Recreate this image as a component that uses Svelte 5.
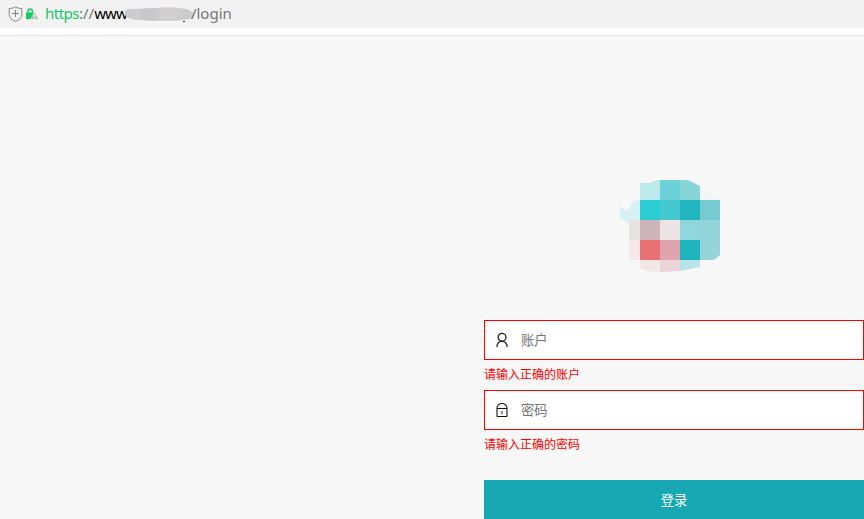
<script>
  let account = $state('');
  let password = $state('');

  // Logo tiles: x, y, width, height, colour
  const tiles = [
    [20, 0, 20, 20, '#bce9e9'], [40, 0, 20, 20, '#6bd1d8'], [60, 0, 20, 20, '#87d5d9'], [80, 0, 20, 20, '#f2f5f5'],
    [0, 0, 20, 50, '#d6f1f3'], [20, 20, 20, 20, '#2bcdd3'], [40, 20, 20, 20, '#43c8cf'], [60, 20, 20, 20, '#21b5c0'], [80, 20, 20, 20, '#75cbd1'],
    [9, 40, 11, 20, '#e9e2e3'], [20, 40, 20, 20, '#ccb4b8'], [40, 40, 20, 20, '#ece3e5'], [60, 40, 20, 20, '#90d6dc'], [80, 40, 20, 20, '#93d4da'],
    [0, 60, 20, 20, '#f5eaea'], [20, 60, 20, 20, '#e87176'], [40, 60, 20, 20, '#dea3ab'], [60, 60, 20, 20, '#1eb5bf'], [80, 60, 20, 20, '#95d3da'],
    [20, 80, 20, 20, '#f4e6e7'], [40, 80, 20, 20, '#ebd3d7'], [60, 80, 20, 20, '#b8e4e7']
  ];
</script>

<div class="window">
  <header class="address">
    <svg class="shield" width="15" height="16" viewBox="0 0 15 16" fill="none" stroke="#858585">
      <path d="M7.5 .7 C5.5 2 3.5 2.5 1.2 2.5 V8 C1.2 12 4 14.2 7.5 15.3 C11 14.2 13.8 12 13.8 8 V2.5 C11.5 2.5 9.5 2 7.5 .7Z" />
      <path d="M4 7.5h7M7.5 4v7" />
    </svg>
    <svg class="secure" width="13" height="12" viewBox="0 0 13 12">
      <path d="M2 5V3.2a2.2 2.2 0 0 1 4.4 0V5" fill="none" stroke="#12cc60" stroke-width="1.4" />
      <path d="M0 4.5h8v6.5H0z" fill="#12cc60" />
      <path d="M8.5 3.7 12.7 11.5H4.7z" fill="#b8b8b8" stroke="#f2f2f2" stroke-width=".5" />
      <path d="M8.7 6.3v2.6M8.7 9.7v1" stroke="#fff" />
    </svg>
    <div class="url"><span class="scheme">https</span><span>://</span><span class="host">www</span><svg class="mask" width="71" height="24" viewBox="0 0 71 24">
        <path d="M7 16 L66 15 Q62 23 42 23 Q20 24 7 16Z" fill="#f5f5f5" />
        <path d="M0 9 Q2 6 8 7 L30 6 Q50 5 62 7 Q72 11 68 16 Q58 19 47 19 Q30 19 16 18 Q3 18 0 13Z" fill="#cdcbcd" />
        <path d="M16 7 30 6v13l-14-1z" fill="#c8c8ca" />
        <path d="M35 6Q43 5 53 6l-2 13H35z" fill="#d1cecf" />
        <path d="M58 19.5h2" stroke="#333" />
      </svg><span class="path">/login</span></div>
  </header>

  <main>
    <form novalidate onsubmit={(event) => event.preventDefault()}>
      <svg class="logo" width="100" height="92" viewBox="0 0 100 92" shape-rendering="crispEdges">
        <defs>
          <clipPath id="logo-edge">
            <path d="M0 26 7 31 14 21 20 20V3H30L36 0H68L80 6 100 20V75L94 80H80V87L60 91 40 92 26 91 20 88V80H9V43L0 38Z" />
          </clipPath>
        </defs>
        <g clip-path="url(#logo-edge)">
          {#each tiles as [x, y, w, h, color]}
            <rect {x} {y} width={w} height={h} fill={color} />
          {/each}
        </g>
      </svg>

      <label class="field">
        <svg width="14" height="16" viewBox="0 0 14 16" fill="none" stroke="#222" stroke-width="1.3">
          <circle cx="7" cy="5.2" r="3.9" />
          <path d="M1.9 15C2.1 11.4 4 9.3 7 9.3s4.9 2.1 5.1 5.7" />
        </svg>
        <input type="text" placeholder="账户" bind:value={account} />
      </label>
      <p class="error">请输入正确的账户</p>

      <label class="field">
        <svg width="14" height="16" viewBox="0 0 14 16" fill="none" stroke="#111" stroke-width="1.1">
          <path d="M2 6.5V6a5 4.5 0 0 1 10 0v.5" />
          <rect x="2" y="6.5" width="10" height="8" rx=".5" />
          <path d="M7 9v3.2" stroke="#2b4f66" stroke-width="1.2" />
        </svg>
        <input type="password" placeholder="密码" bind:value={password} />
      </label>
      <p class="error">请输入正确的密码</p>

      <button type="submit">登录</button>
    </form>
  </main>
</div>

<style>
  .window {
    height: 519px;
    display: flex;
    flex-direction: column;
    overflow: hidden;
    background: #fff;
    font-family: "Noto Sans CJK SC", sans-serif;
  }
  .address {
    height: 28px;
    display: flex;
    align-items: center;
    padding-left: 8px;
    box-sizing: border-box;
    background: #f2f2f2;
    border-bottom-left-radius: 3px;
  }
  .secure { margin-left: 3px; }
  .url {
    display: flex;
    align-items: center;
    height: 28px;
    margin-left: 6px;
    font: 15px/26px "Noto Sans", sans-serif;
    color: #777;
  }
  .url span { padding-bottom: 2px; }
  .scheme { color: #12c866; letter-spacing: -0.5px; }
  .host { color: #000; letter-spacing: -0.9px; }
  .mask { margin: 0 -5px 0 -2px; }
  main {
    flex: 1;
    margin-top: 7px;
    border-top: 1px solid #e5e5e5;
    background: #f7f7f7;
    display: flex;
    justify-content: flex-end;
  }
  form {
    width: 380px;
    padding-top: 144px;
    display: flex;
    flex-direction: column;
  }
  .logo { margin: 0 0 48px 136px; }
  .field {
    height: 40px;
    box-sizing: border-box;
    border: 1px solid #f00;
    background: #fff;
    display: flex;
    align-items: center;
    padding-left: 10px;
  }
  input {
    flex: 1;
    min-width: 0;
    margin-left: 12px;
    padding: 0;
    border: 0;
    outline: 0;
    background: transparent;
    font: 13.3333px/20px "Noto Sans CJK SC", sans-serif;
  }
  input::placeholder { color: #757575; }
  .error {
    height: 30px;
    margin: 0;
    color: #f00;
    font-size: 12px;
    line-height: 28px;
  }
  .error + button { margin-top: 20px; }
  button {
    height: 39px;
    padding: 0;
    border: 0;
    background: #17a8b4;
    color: #fff;
    font: 13.3333px/39px "Noto Sans CJK SC", sans-serif;
  }
</style>
